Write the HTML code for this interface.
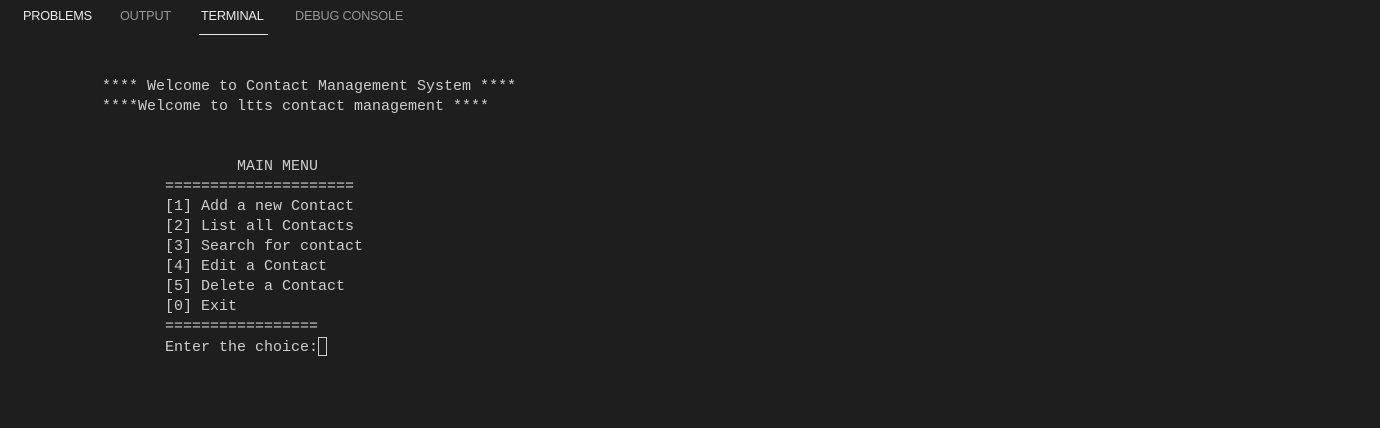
<!DOCTYPE html>
<html><head><meta charset="utf-8"><style>
html,body{margin:0;padding:0;background:#1e1e1e;width:1380px;height:428px;overflow:hidden}
.tab{position:absolute;top:9px;font:12.7px "Liberation Sans",sans-serif;color:#969696;letter-spacing:-0.2px}
.ul{position:absolute;left:199px;top:34px;width:69px;height:1px;background:#e7e7e7}
pre{position:absolute;left:102px;top:77px;margin:0;font:15px/20px "Liberation Mono",monospace;color:#cccccc}
.cur{display:inline-block;width:9px;height:19px;border:1px solid #cccccc;vertical-align:-5px;box-sizing:border-box}
</style></head><body>
<div class="tab" style="left:23px;color:#e7e7e7">PROBLEMS</div>
<div class="tab" style="left:120px">OUTPUT</div>
<div class="tab" style="left:201px;color:#e7e7e7">TERMINAL</div>
<div class="tab" style="left:295px">DEBUG CONSOLE</div>
<div class="ul"></div>
<pre>**** Welcome to Contact Management System ****
****Welcome to ltts contact management ****


               MAIN MENU
       =====================
       [1] Add a new Contact
       [2] List all Contacts
       [3] Search for contact
       [4] Edit a Contact
       [5] Delete a Contact
       [0] Exit
       =================
       Enter the choice:<span class="cur"></span></pre>
</body></html>
